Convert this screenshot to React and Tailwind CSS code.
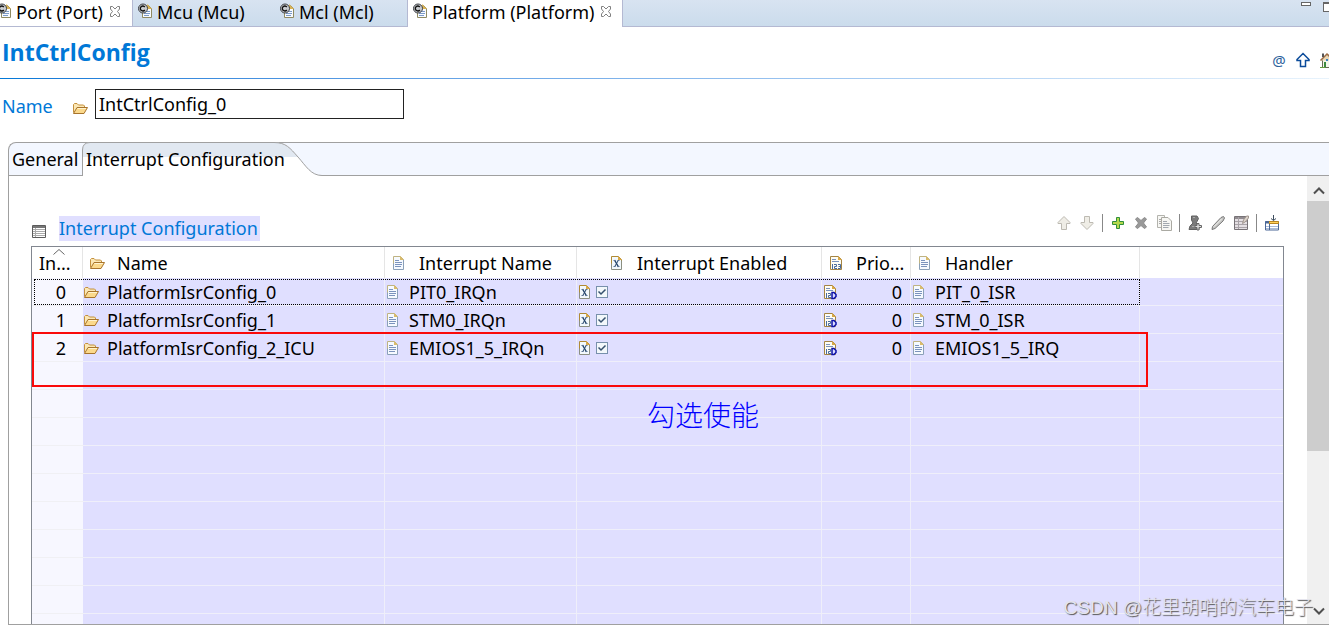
import React from "react";

const PAGE_FONT = "font-['Noto_Sans','Open_Sans','Noto_Sans_CJK_SC',sans-serif]";

function Icon({ children, className = "", size = 16 }) {
  return (
    <svg
      aria-hidden="true"
      width={size}
      height={size}
      viewBox="0 0 16 16"
      fill="none"
      className={`block shrink-0 ${className}`}
    >
      {children}
    </svg>
  );
}

function FolderIcon() {
  return (
    <Icon>
      <path d="M1.5 12.5V4.5l1-1H5l1.500 1.500H11.500l1 1V8" fill="#fbe7b4" stroke="#c4903c" />
      <path d="M1.500 13.500L5 7.500H15.500L12 13.500Z" fill="#fbd98c" stroke="#a8742c" />
      <path d="M5.500 8.500H14" stroke="#fff3cf" />
    </Icon>
  );
}

function DocIcon() {
  return (
    <Icon>
      <path d="M2.500 1.500H9.500L12.500 4.500V14.500H2.500Z" fill="#f6faff" />
      <path d="M2.500 9V1.500H9.500L12.500 4.500" stroke="#bfb382" />
      <path d="M2.500 8.500V14.500H12.500V4.500" stroke="#8aa0b8" />
      <path d="M9 1L13 5H9Z" fill="#d9bb6c" />
      <path d="M4 5.500H8M4 7.500H11M4 9.500H11M4 11.500H10" stroke="#7b93bd" />
    </Icon>
  );
}

function ExcelDocIcon() {
  return (
    <Icon>
      <path d="M2.500 1.500H9.500L12.500 4.500V14.500H2.500Z" fill="#f3f9fd" />
      <path d="M2.500 9V1.500H9.500L12.500 4.500V6" stroke="#b08b35" />
      <path d="M2.500 8.500V14.500H12.500V5.500" stroke="#8b8f82" />
      <path d="M9 1L13 5H9Z" fill="#d8a848" />
      <path d="M5.500 5L9.500 12" stroke="#24446c" strokeWidth="1.500" />
      <path d="M9.500 5L5.500 12" stroke="#24446c" />
      <path d="M4.500 11.500H6.500M8.500 11.500H10.500M4.500 5.500H6.500M8.500 5.500H10.500" stroke="#5a7394" />
    </Icon>
  );
}

function NumberDocIcon({ derived = false }) {
  return (
    <Icon>
      <path d="M2.500 1.500H10.500L13.500 4.500V14.500H2.500Z" fill="#fffdf3" stroke="#a48443" />
      <path d="M10 1L14 5H10Z" fill="#d8a848" />
      <path d="M4 4.500H8M4 6.500H11" stroke="#7b93bd" />
      <path
        d="M4.500 9V14M6 9.500H8.500V11.500H6.500V13.500H9M10 9.500H12.500V13.500H10M10.500 11.500H12.500"
        stroke="#496b9c"
      />
      {derived && (
        <path d="M10 8.500V14.500H12L14 12.500V10.500L12 8.500Z" fill="#dcdcff" stroke="#0b10a8" strokeWidth="1.500" />
      )}
    </Icon>
  );
}

function ConfigIcon() {
  return (
    <Icon>
      <path d="M5.500 2.500H11.500L14.500 5.500V14.500H5.500Z" fill="#f8fbff" stroke="#8f8a62" />
      <path d="M10 1L15 6H10Z" fill="#d9b357" />
      <path d="M8 8.500H13M7 10.500H13M7 12.500H12" stroke="#7b9ac8" />
      <circle cx="6" cy="5.500" r="4.500" fill="#c9ccd0" stroke="#3a3d42" />
      <path d="M7.800 4A2.500 2.500 0 1 0 7.800 7" stroke="#111" strokeWidth="1.400" />
    </Icon>
  );
}

function CloseIcon() {
  return (
    <Icon>
      <path
        d="M3.500 2.500H5.500L8 5L10.500 2.500H12.500V5L10.500 7.500L12.500 10V12.500H10.500L8 10L5.500 12.500H3.500V10L5.500 7.500L3.500 5Z"
        stroke="#808080"
      />
    </Icon>
  );
}

function GridIcon() {
  return (
    <Icon>
      <path d="M1.500 2.500H14.500V14.500H1.500Z" fill="#fff" stroke="#5c5c5c" />
      <path d="M2 4H14" stroke="#777" strokeWidth="2" />
      <path d="M2 6.500H14M2 8.500H14M2 10.500H14M2 12.500H14M4.500 5V14" stroke="#aaa" />
    </Icon>
  );
}

const arrowUp = "M8 1.500L14 7.500V8.500H10.500V14.500H5.500V8.500H2V7.500Z";
const arrowDown = "M8 14.500L14 8.500V7.500H10.500V1.500H5.500V7.500H2V8.500Z";

const toolGroups = [
  [
    {
      label: "Move up",
      icon: <path d={arrowUp} fill="#efede6" stroke="#bdbab2" />,
    },
    {
      label: "Move down",
      icon: <path d={arrowDown} fill="#efede6" stroke="#bdbab2" />,
    },
  ],
  [
    {
      label: "Add",
      icon: (
        <path
          d="M6.500 2.500H9.500V6.500H13.500V9.500H9.500V13.500H6.500V9.500H2.500V6.500H6.500Z"
          fill="#b5d84c"
          stroke="#2f8f3b"
        />
      ),
    },
    {
      label: "Delete",
      icon: (
        <path
          d="M2.500 4L4.500 2.500L8 5.500L11.500 2.500L13.500 4L10.500 8L13.500 12L11.500 13.500L8 10.500L4.500 13.500L2.500 12L5.500 8Z"
          fill="#999"
          stroke="#8c8c8c"
        />
      ),
    },
    {
      label: "Duplicate",
      icon: (
        <>
          <path d="M1.500 .5H8.500V12.500H1.500Z" fill="#f7f7f4" stroke="#b3b3ad" />
          <path d="M3 4.500H5M3 6.500H5M3 8.500H5" stroke="#aaa" />
          <path d="M5.500 2.500H12L15.500 6V15.500H5.500Z" fill="#f7f7f4" stroke="#aaa9a2" />
          <path d="M7 6.500H11M7 8.500H13.500M7 10.500H13.500M7 12.500H12.500" stroke="#a3a9b0" />
        </>
      ),
    },
  ],
  [
    {
      label: "Add instance",
      icon: (
        <>
          <path
            d="M4.500 1H10L11.500 3.500L10 6.500L9 8L12 10.500V14.500H2L3 11L6 8L4.500 5Z"
            fill="#7b7b7b"
            stroke="#606060"
          />
          <path d="M6 2.500H8M5 11.500H8" stroke="#aaa" />
          <path d="M10 8.500H12V10.500H14.500V12.500H12V15H10V12.500H8V10.500H10Z" fill="#ddd" stroke="#666" />
        </>
      ),
    },
    {
      label: "Edit",
      icon: (
        <>
          <path d="M2 14.500L2.500 11.500L11 2.500L13.500 1.500L14.500 3L13 6L5 13.500Z" fill="#c9c9c7" stroke="#777" />
          <path d="M4 11.500L11.500 4" stroke="#f0f0ed" />
        </>
      ),
    },
    {
      label: "Edit table",
      icon: (
        <>
          <path d="M1.500 1.500H14.500V14.500H1.500Z" fill="#e4dfe3" stroke="#777276" />
          <path d="M2 3H14" stroke="#918c90" strokeWidth="2" />
          <path d="M2 6.500H14M2 9.500H14M2 12.500H14M5.500 2V14" stroke="#a9a3a8" />
          <path d="M9.500 8.500L10.500 5L13.500 1H15.500V3L12 7Z" fill="#ddd5cd" stroke="#a0958e" />
        </>
      ),
    },
  ],
  [
    {
      label: "Insert column",
      icon: (
        <>
          <path d="M1.500 6.500H14.500V15H1.500Z" fill="#fff" stroke="#4b6796" />
          <path d="M5 6.500H14.500V8.500H5Z" fill="#ffd15a" stroke="#b98521" />
          <path d="M1 7.500H5" stroke="#4b6796" strokeWidth="2" />
          <path d="M2 11.500H14M2 13.500H14" stroke="#a9bbda" />
          <path d="M5.500 9V15" stroke="#4b6796" />
          <path d="M9.500 0V5M7 3.500L9.500 5.500L12 3.500" stroke="#3c4c5e" />
        </>
      ),
    },
  ],
];

const editorTabs = [
  { label: "Port (Port)", width: "w-[141px] -ml-2 bg-white", closable: true },
  { label: "Mcu (Mcu)", width: "w-[142px]" },
  { label: "Mcl (Mcl)", width: "w-[132px]" },
  { label: "Platform (Platform)", width: "w-[216px]", closable: true, active: true },
];

function EditorTabs() {
  return (
    <div className="flex h-[27px] shrink-0 border-b border-[#b4b9d2] bg-linear-to-b from-[#d8e3f1] to-[#cbdcec]">
      <div role="tablist" className="flex min-w-0">
        {editorTabs.map((tab) => (
          <button
            key={tab.label}
            type="button"
            role="tab"
            aria-selected={!!tab.active}
            className={`flex shrink-0 items-center gap-1 whitespace-nowrap pl-1 ${tab.width} ${
              tab.active
                ? "h-[27px] border-x border-[#b4b9d2] bg-white pb-[3px]"
                : tab.closable
                  ? "h-[26px] border-r border-[#b4b9d2] pb-0.5"
                  : "h-[26px] pb-0.5"
            }`}
          >
            <span className="pb-0.5">
              <ConfigIcon />
            </span>
            <span className="leading-6">{tab.label}</span>
            {tab.closable && <CloseIcon />}
          </button>
        ))}
      </div>
      <div className="ml-auto flex items-start overflow-hidden">
        <button type="button" aria-label="Minimize" className="mr-3 mt-0.5 h-1 w-2.5 border border-[#666] bg-white" />
        <button
          type="button"
          aria-label="Maximize"
          className="-mr-1 mt-0.5 h-2.5 w-2.5 border border-t-2 border-[#666] bg-white"
        />
      </div>
    </div>
  );
}

function TitleBar() {
  return (
    <header className="shrink-0">
      <div className="flex h-[51px] items-center justify-between overflow-hidden pb-0.5 pl-0.5">
        <h1 className="font-['Open_Sans','Noto_Sans',sans-serif] text-[23px] font-bold leading-8 text-[#0078d7]">
          IntCtrlConfig
        </h1>
        <div className="-mr-1.5 flex items-center gap-2 pt-4">
          <button type="button" aria-label="Reference" className="w-4 text-[15px] leading-4 text-[#2c629c]">
            @
          </button>
          <button type="button" aria-label="Go up">
            <Icon>
              <path d={arrowUp} fill="#fff" stroke="#0b4b9a" strokeWidth="1.500" />
            </Icon>
          </button>
          <button type="button" aria-label="Home">
            <Icon>
              <path d="M3.500 8V15.500H14.500V8" fill="#f4f6ea" stroke="#666a52" />
              <path d="M1.500 8.500L8 2L15 8.500" fill="#ead7b5" stroke="#9c6c45" strokeWidth="1.500" />
              <path d="M4 1.500V5" stroke="#555" strokeWidth="2" />
              <path d="M5 10H7V15H5Z" fill="#3c8b3e" />
              <path d="M7 7H9V9H7Z" fill="#397fc2" />
              <path d="M1 15.500H6" stroke="#64a03c" />
            </Icon>
          </button>
        </div>
      </div>
      <div className="h-px bg-linear-to-r from-[#0078d7] to-[#e8f3fc]" />
    </header>
  );
}

function PageTabs() {
  return (
    <div className="relative flex h-[34px] shrink-0 rounded-tl-lg border border-r-0 border-[#a0a0a0] bg-[#f3f7ff]">
      <div role="tablist" className="flex">
        <button type="button" role="tab" aria-selected="false" className="w-[73px] whitespace-nowrap pl-[3px] text-left leading-8">
          General
        </button>
        <button
          type="button"
          role="tab"
          aria-selected="true"
          className="relative -my-px w-[240px] whitespace-nowrap pl-1 text-left"
        >
          <svg aria-hidden="true" viewBox="0 0 240 34" className="absolute inset-0 h-full w-full">
            <path
              d="M.5 34V8Q.5 .5 8 .5H192C204 .5 208 6 216 15C224 24 229 33.500 240 33.500V34Z"
              fill="#fff"
            />
            <path d="M.5 15V8Q.5 .5 8 .5H192C204 .5 208 6 216 15Z" fill="#e1e8f1" />
            <path
              d="M.5 34V8Q.5 .5 8 .5H192C204 .5 208 6 216 15C224 24 229 33.500 240 33.500"
              fill="none"
              stroke="#a0a0a0"
            />
          </svg>
          <span className="relative">Interrupt Configuration</span>
        </button>
      </div>
    </div>
  );
}

function Toolbar() {
  return (
    <div role="toolbar" aria-label="Table actions" className="flex items-center">
      {toolGroups.map((group, index) => (
        <React.Fragment key={group[0].label}>
          {index > 0 && (
            <span className="flex w-2 justify-center">
              <span className="h-[18px] w-px bg-[#888]" />
            </span>
          )}
          {group.map((tool) => (
            <button key={tool.label} type="button" aria-label={tool.label} className="flex w-[23px] justify-center">
              <Icon>{tool.icon}</Icon>
            </button>
          ))}
        </React.Fragment>
      ))}
    </div>
  );
}

const rows = [
  { name: "PlatformIsrConfig_0", irq: "PIT0_IRQn", priority: 0, handler: "PIT_0_ISR" },
  { name: "PlatformIsrConfig_1", irq: "STM0_IRQn", priority: 0, handler: "STM_0_ISR" },
  { name: "PlatformIsrConfig_2_ICU", irq: "EMIOS1_5_IRQn", priority: 0, handler: "EMIOS1_5_IRQ" },
];

const emptyRows = Array.from({ length: 10 }, (_, i) => i);

function HeaderCell({ icon, children, indent = "pl-1.5" }) {
  return (
    <th scope="col" className="border-r border-[#e5e5e5] p-0 text-left font-normal">
      <div className={`flex items-center gap-3 whitespace-nowrap ${indent}`}>
        {icon}
        <span>{children}</span>
      </div>
    </th>
  );
}

function Cell({ children, className = "" }) {
  return (
    <td className={`border-b border-r border-[#efeffa] p-0 ${className}`}>
      <div className="flex items-center gap-2 whitespace-nowrap leading-6">{children}</div>
    </td>
  );
}

function InterruptTable() {
  return (
    <div className="relative min-h-0 flex-1 overflow-hidden border border-b-0 border-[#828790]">
      <table className="w-full table-fixed border-separate border-spacing-0 leading-6">
        <colgroup>
          <col className="w-[51px]" />
          <col className="w-[302px]" />
          <col className="w-[192px]" />
          <col className="w-[245px]" />
          <col className="w-[89px]" />
          <col className="w-[229px]" />
          <col />
        </colgroup>
        <thead>
          <tr className="h-[31px]">
            <th scope="col" className="relative border-r border-[#e5e5e5] p-0 pl-[7px] text-left font-normal">
              <svg aria-hidden="true" viewBox="0 0 12 6" className="absolute left-[21px] top-0.5 h-1.5 w-3">
                <path d="M.5 5.500L6 .5L11.500 5.500" fill="none" stroke="#666" />
              </svg>
              In...
            </th>
            <HeaderCell icon={<FolderIcon />}>Name</HeaderCell>
            <HeaderCell icon={<DocIcon />}>Interrupt Name</HeaderCell>
            <HeaderCell icon={<ExcelDocIcon />} indent="pl-8">
              Interrupt Enabled
            </HeaderCell>
            <HeaderCell icon={<NumberDocIcon />}>Prio...</HeaderCell>
            <HeaderCell icon={<DocIcon />}>Handler</HeaderCell>
            <th className="p-0" />
          </tr>
        </thead>
        <tbody className="bg-[#e0dfff]">
          {rows.map((row, index) => (
            <tr key={row.name} className="h-7">
              <td className="border-b border-[#f0f0f4] bg-[#f7f7ff] p-0 pr-[17px] text-right">{index}</td>
              <Cell>
                <FolderIcon />
                {row.name}
              </Cell>
              <Cell>
                <DocIcon />
                {row.irq}
              </Cell>
              <Cell>
                <span className="flex items-center gap-[3px]">
                  <ExcelDocIcon />
                  <span className="relative block h-3 w-3">
                    <input
                      type="checkbox"
                      defaultChecked
                      aria-label={`Enable ${row.irq}`}
                      className="peer block h-3 w-3 appearance-none border border-[#7890ac] bg-[#f3f8fb]"
                    />
                    <svg
                      aria-hidden="true"
                      viewBox="0 0 12 12"
                      className="pointer-events-none invisible absolute inset-0 h-3 w-3 peer-checked:visible"
                    >
                      <path d="M2.500 5.500L5 8L9.500 3.500" fill="none" stroke="#36506e" strokeWidth="1.500" />
                    </svg>
                  </span>
                </span>
              </Cell>
              <Cell className="pr-2">
                <NumberDocIcon derived />
                <span className="ml-auto">{row.priority}</span>
              </Cell>
              <Cell>
                <DocIcon />
                {row.handler}
              </Cell>
              <td className="border-b border-[#efeffa] p-0" />
            </tr>
          ))}
          {emptyRows.map((row) => (
            <tr key={row} className="h-7">
              <td className="border-b border-[#f0f0f4] bg-[#f7f7ff] p-0" />
              <Cell />
              <Cell />
              <Cell />
              <Cell />
              <Cell />
              <td className="border-b border-[#efeffa] p-0" />
            </tr>
          ))}
        </tbody>
      </table>
      <div className="pointer-events-none absolute left-0.5 top-8 h-[26px] w-[1106px] border border-dotted border-black" />
      <div className="pointer-events-none absolute left-0 top-[85px] h-[55px] w-[1116px] border-2 border-[#fa0a0a]" />
      <p className="pointer-events-none absolute left-[615px] top-[149px] font-['Noto_Sans_CJK_SC',sans-serif] text-[28px] font-light leading-9 text-[#0000ff]">
        勾选使能
      </p>
    </div>
  );
}

function ScrollBar() {
  return (
    <div className="flex w-[22px] shrink-0 flex-col items-center justify-between bg-[#f0f0f0]">
      <button type="button" aria-label="Scroll up" className="flex h-[25px] w-full items-center justify-center pl-0.5 pt-1">
        <svg aria-hidden="true" viewBox="0 0 12 8" className="h-2 w-3">
          <path d="M1 6.500L6 1.500L11 6.500" fill="none" stroke="#505050" strokeWidth="2" />
        </svg>
      </button>
      <div className="flex w-full flex-1 flex-col">
        <div className="w-full basis-[63%] bg-[#cdcdcd]" />
      </div>
      <button type="button" aria-label="Scroll down" className="flex h-[26px] w-full items-center justify-center pl-0.5">
        <svg aria-hidden="true" viewBox="0 0 12 8" className="h-2 w-3">
          <path d="M1 1.500L6 6.500L11 1.500" fill="none" stroke="#505050" strokeWidth="2" />
        </svg>
      </button>
    </div>
  );
}

export default function App() {
  return (
    <div className={`relative flex h-screen flex-col overflow-hidden bg-white text-[18px] text-black ${PAGE_FONT}`}>
      <EditorTabs />
      <TitleBar />
      <div className="flex shrink-0 items-center pb-[23px] pl-0.5 pt-2.5">
        <label htmlFor="config-name" className="w-[70px] pt-1 leading-6 text-[#0078d7]">
          Name
        </label>
        <span className="pt-2">
          <FolderIcon />
        </span>
        <input
          id="config-name"
          type="text"
          defaultValue="IntCtrlConfig_0"
          className="ml-[7px] h-[30px] w-[309px] border border-[#222] bg-white px-[3px] leading-6 outline-none"
        />
      </div>
      <main className="flex min-h-0 flex-1 flex-col pb-px pl-2">
        <PageTabs />
        <div className="flex min-h-0 flex-1 border-b border-l border-[#a0a0a0]">
          <section className="flex min-w-0 flex-1 flex-col pl-[22px] pr-[23px] pt-10">
            <div className="mb-[5px] flex h-[25px] shrink-0 items-center">
              <span className="pt-1">
                <GridIcon />
              </span>
              <h2 className="ml-3 bg-[#e0dfff] pr-0.5 leading-[25px] text-[#0078d7]">Interrupt Configuration</h2>
              <div className="ml-auto pb-3 pr-px">
                <Toolbar />
              </div>
            </div>
            <InterruptTable />
          </section>
          <ScrollBar />
        </div>
      </main>
      <p className="pointer-events-none absolute bottom-1 right-4 font-['Liberation_Sans','Noto_Sans_CJK_SC',sans-serif] text-[19px] font-light leading-7 text-[#e4e4ec] [text-shadow:1px_1px_1px_#555]">
        CSDN @花里胡哨的汽车电子
      </p>
    </div>
  );
}
